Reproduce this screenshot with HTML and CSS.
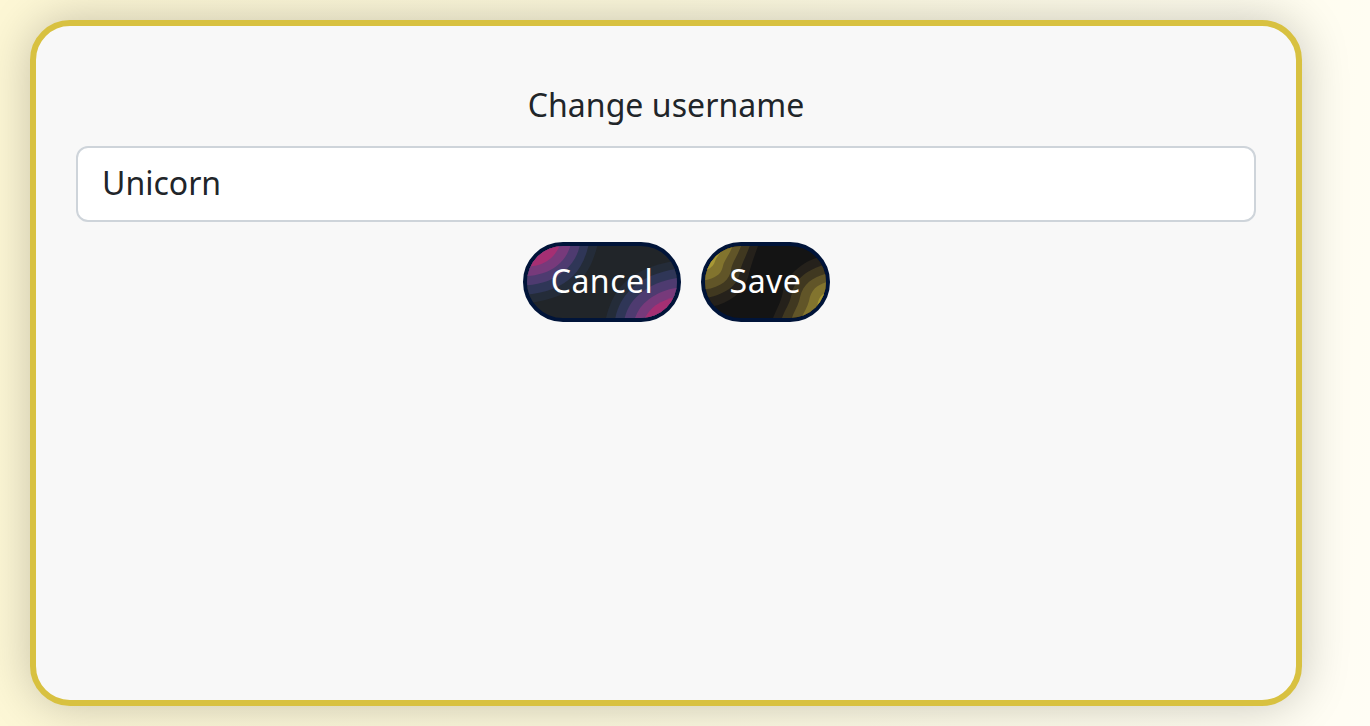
FILE: index.html
```html
<!DOCTYPE html>
<html lang="en">
<head>
<meta charset="utf-8">
<title>Change username</title>
<link rel="stylesheet" href="styles.css">
</head>
<body>
<main class="card">
  <form class="form">
    <label class="label" for="username"><span class="label-text">Change username</span></label>
    <input class="input" id="username" type="text" value="Unicorn">
    <div class="actions">
      <button class="btn cancel" type="button">
        <svg class="waves" viewBox="36 33 450 216" preserveAspectRatio="none" aria-hidden="true">
          <path fill="#242c39" d="M36 33H247C236 72 226 100 200 131C166 176 110 195 36 205Z"/>
          <path fill="#2f3657" d="M36 33H220C211 70 197 99 174 123C139 158 91 173 36 179Z"/>
          <path fill="#4e3b70" d="M36 33H194C187 63 173 87 150 106C119 136 80 147 36 151Z"/>
          <path fill="#773a7b" d="M36 33H166C158 58 146 77 126 92C99 113 67 121 36 123Z"/>
          <path fill="#a52f73" d="M36 33H134C124 53 112 70 93 80C75 90 55 94 36 95Z"/>
          <path fill="#242c39" d="M486 249H273C282 211 296 180 319 153C354 112 411 90 486 76Z"/>
          <path fill="#2f3657" d="M486 249H301C308 215 323 188 345 165C381 127 429 111 486 101Z"/>
          <path fill="#4e3b70" d="M486 249H329C337 219 350 198 371 180C405 149 444 136 486 129Z"/>
          <path fill="#773a7b" d="M486 249H360C368 226 381 208 400 194C427 173 455 163 486 158Z"/>
          <path fill="#a52f73" d="M486 249H389C398 235 408 221 422 211C442 198 462 190 486 187Z"/>
        </svg>
        <span class="btn-text">Cancel</span>
      </button>
      <button class="btn save" type="button">
        <svg class="waves" viewBox="45 33 363 216" preserveAspectRatio="none" aria-hidden="true">
          <path fill="#25211b" d="M45 33H204C189 75 183 91 177 117C168 159 137 193 83 211L45 218Z"/>
          <path fill="#403820" d="M45 33H179C164 75 154 88 150 110C145 143 121 174 45 190Z"/>
          <path fill="#615528" d="M45 33H153C139 70 127 81 123 105C120 132 94 158 45 163Z"/>
          <path fill="#82742e" d="M45 33H128C115 66 102 75 98 97C93 119 73 131 45 136Z"/>
          <path fill="#a79835" d="M45 33H101C91 58 79 65 75 79C71 94 59 101 45 108Z"/>
          <path fill="#25211b" d="M408 249H249C259 223 273 202 278 173C285 129 325 90 370 72L408 60Z"/>
          <path fill="#403820" d="M408 249H276C285 224 299 207 304 181C312 135 350 104 408 88Z"/>
          <path fill="#615528" d="M408 249H306C313 227 325 213 330 187C338 146 369 127 408 116Z"/>
          <path fill="#82742e" d="M408 249H334C342 231 352 218 357 198C363 165 380 151 408 142Z"/>
          <path fill="#a79835" d="M408 249H362C371 235 378 225 382 210C386 190 393 180 408 172Z"/>
        </svg>
        <span class="btn-text">Save</span>
      </button>
    </div>
  </form>
</main>
</body>
</html>
```
FILE: styles.css
```css
* {
  box-sizing: border-box;
}

body {
  margin: 0;
  height: 726px;
  padding: 20px 68px 20px 30px;
  overflow: hidden;
  background: linear-gradient(97deg, #fdf7d5 0%, #fcf8dc 45%, #fffdf0 90%, #fffdf5 100%);
  font-family: "Noto Sans", "Open Sans", sans-serif;
  font-size: 32px;
  color: #212529;
}

.card {
  height: 686px;
  padding: 55px 40px 0;
  border: 6px solid #d8c140;
  border-radius: 40px;
  background: #f8f8f8;
  box-shadow: 0 0 48px rgba(0, 0, 0, 0.22);
}

.form {
  display: flex;
  flex-direction: column;
}

.label {
  height: 48px;
  margin-bottom: 17px;
  line-height: 48px;
  text-align: center;
}

.label-text {
  display: inline-block;
  letter-spacing: 0.05px;
}

.input {
  width: 100%;
  height: 76px;
  padding: 0 24px 4px;
  border: 2px solid #ced4da;
  border-radius: 12px;
  background: #fff;
  color: inherit;
  font: inherit;
  outline: none;
}

.actions {
  display: flex;
  justify-content: center;
  gap: 20px;
  margin-top: 20px;
  padding-left: 21px;
}

.btn {
  display: grid;
  place-items: center;
  height: 80px;
  padding: 0;
  border: 4px solid #001439;
  border-radius: 40px;
  overflow: hidden;
  color: #fff;
  font: inherit;
  letter-spacing: 0.5px;
}

.cancel {
  width: 158px;
  background: #212529;
}

.save {
  width: 129px;
  background: #141414;
}

.waves,
.btn-text {
  grid-area: 1 / 1;
}

.waves {
  display: block;
  width: 100%;
  height: 72px;
}

.btn-text {
  z-index: 1;
  line-height: 70px;
  padding-bottom: 2px;
}
```
